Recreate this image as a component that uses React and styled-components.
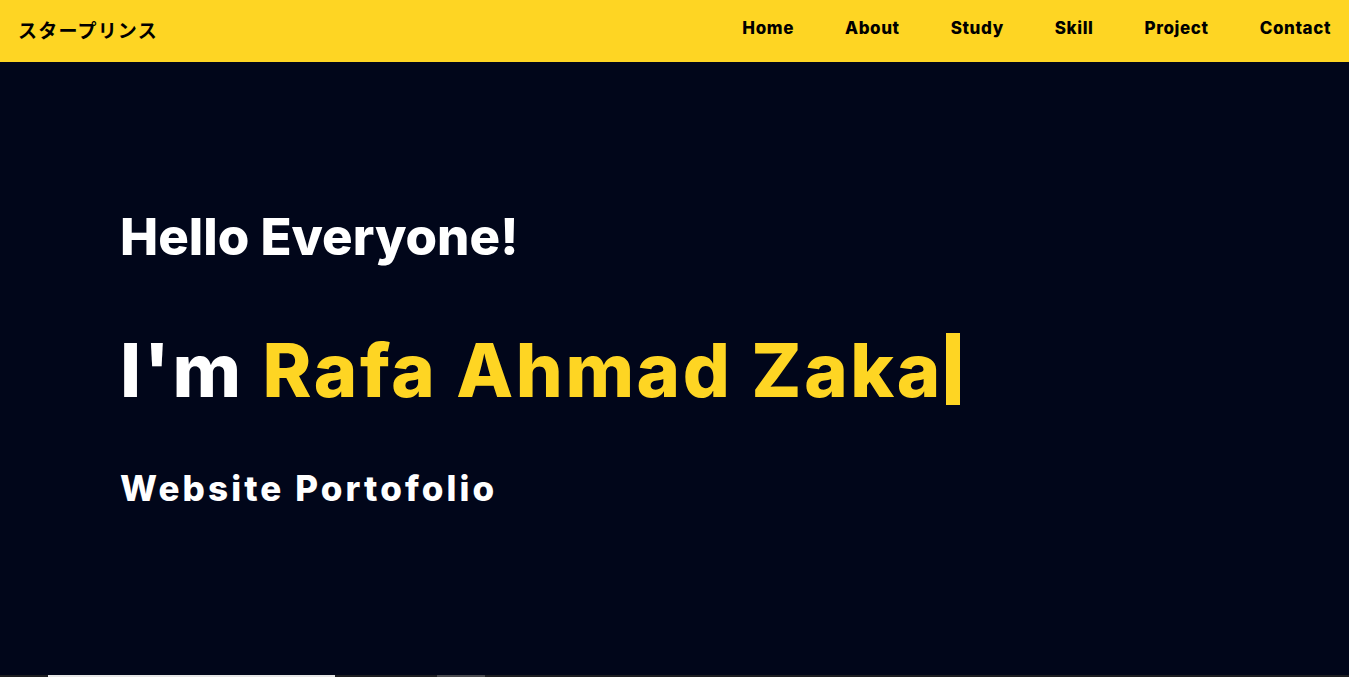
import React from "react";
import styled, { createGlobalStyle } from "styled-components";

const Global = createGlobalStyle`
  html, body { margin: 0; padding: 0; background: #01061a; }
  body { font-family: Inter, "Noto Sans", sans-serif; overflow: hidden; }
`;

const Page = styled.div`
  width: 1349px;
  height: 677px;
  display: flex;
  flex-direction: column;
  overflow: hidden;
`;

const Navbar = styled.header`
  height: 62px;
  flex: none;
  background: #fed523;
  display: flex;
  align-items: center;
  justify-content: space-between;
  padding: 0 18px 0 18px;
  box-sizing: border-box;
`;

const Logo = styled.div`
  font-family: "Noto Sans CJK JP", "Noto Sans", sans-serif;
  font-size: 19px;
  font-weight: 700;
  color: #000;
  margin-top: -4px;
  letter-spacing: 1.2px;
`;

const NavList = styled.nav`
  display: flex;
  gap: 51px;
  margin-top: -7px;
`;

const NavItem = styled.a`
  font-family: Inter, sans-serif;
  font-weight: 800;
  font-size: 17px;
  letter-spacing: 0.6px;
  color: #000;
  text-decoration: none;
`;

const Hero = styled.section`
  height: 613px;
  flex: none;
  background: #01061a;
  display: flex;
  flex-direction: column;
  padding: 145px 0 0 120px;
  box-sizing: border-box;
`;

const Greeting = styled.h2`
  margin: 0;
  font-family: Inter, sans-serif;
  font-weight: 800;
  font-size: 51px;
  line-height: 60px;
  color: #fff;
`;

const Name = styled.h1`
  margin: 58px 0 0;
  display: flex;
  align-items: flex-start;
  font-family: Inter, sans-serif;
  font-weight: 800;
  font-size: 74px;
  line-height: 90px;
  letter-spacing: 2.6px;
  color: #fff;
  white-space: pre;
`;

const Accent = styled.span`
  color: #fed523;
`;

const Cursor = styled.span`
  display: inline-block;
  width: 14px;
  height: 72px;
  margin-left: 3px;
  margin-top: 8px;
  background: #fed523;
`;

const Subtitle = styled.h3`
  margin: 52px 0 0;
  font-family: Inter, sans-serif;
  font-weight: 800;
  font-size: 35px;
  line-height: 42px;
  letter-spacing: 3.1px;
  color: #fff;
`;

const NextSection = styled.section`
  flex: 1;
  background: #1e1e22;
  display: flex;
  align-items: flex-start;
  padding-left: 48px;
  gap: 102px;
`;

const Strip = styled.div`
  height: 2px;
  width: ${(p) => p.w}px;
  background: ${(p) => p.c};
`;

const links = ["Home", "About", "Study", "Skill", "Project", "Contact"];

export default function App() {
  return (
    <Page>
      <Global />
      <Navbar>
        <Logo>スタープリンス</Logo>
        <NavList>
          {links.map((l) => (
            <NavItem key={l} href="#">{l}</NavItem>
          ))}
        </NavList>
      </Navbar>
      <Hero>
        <Greeting>Hello Everyone!</Greeting>
        <Name>
          I'm <Accent>Rafa Ahmad Zaka</Accent>
          <Cursor />
        </Name>
        <Subtitle>Website Portofolio</Subtitle>
      </Hero>
      <NextSection>
        <Strip w={287} c="#e6e6e6" />
        <Strip w={48} c="#4a4a4e" />
      </NextSection>
    </Page>
  );
}
